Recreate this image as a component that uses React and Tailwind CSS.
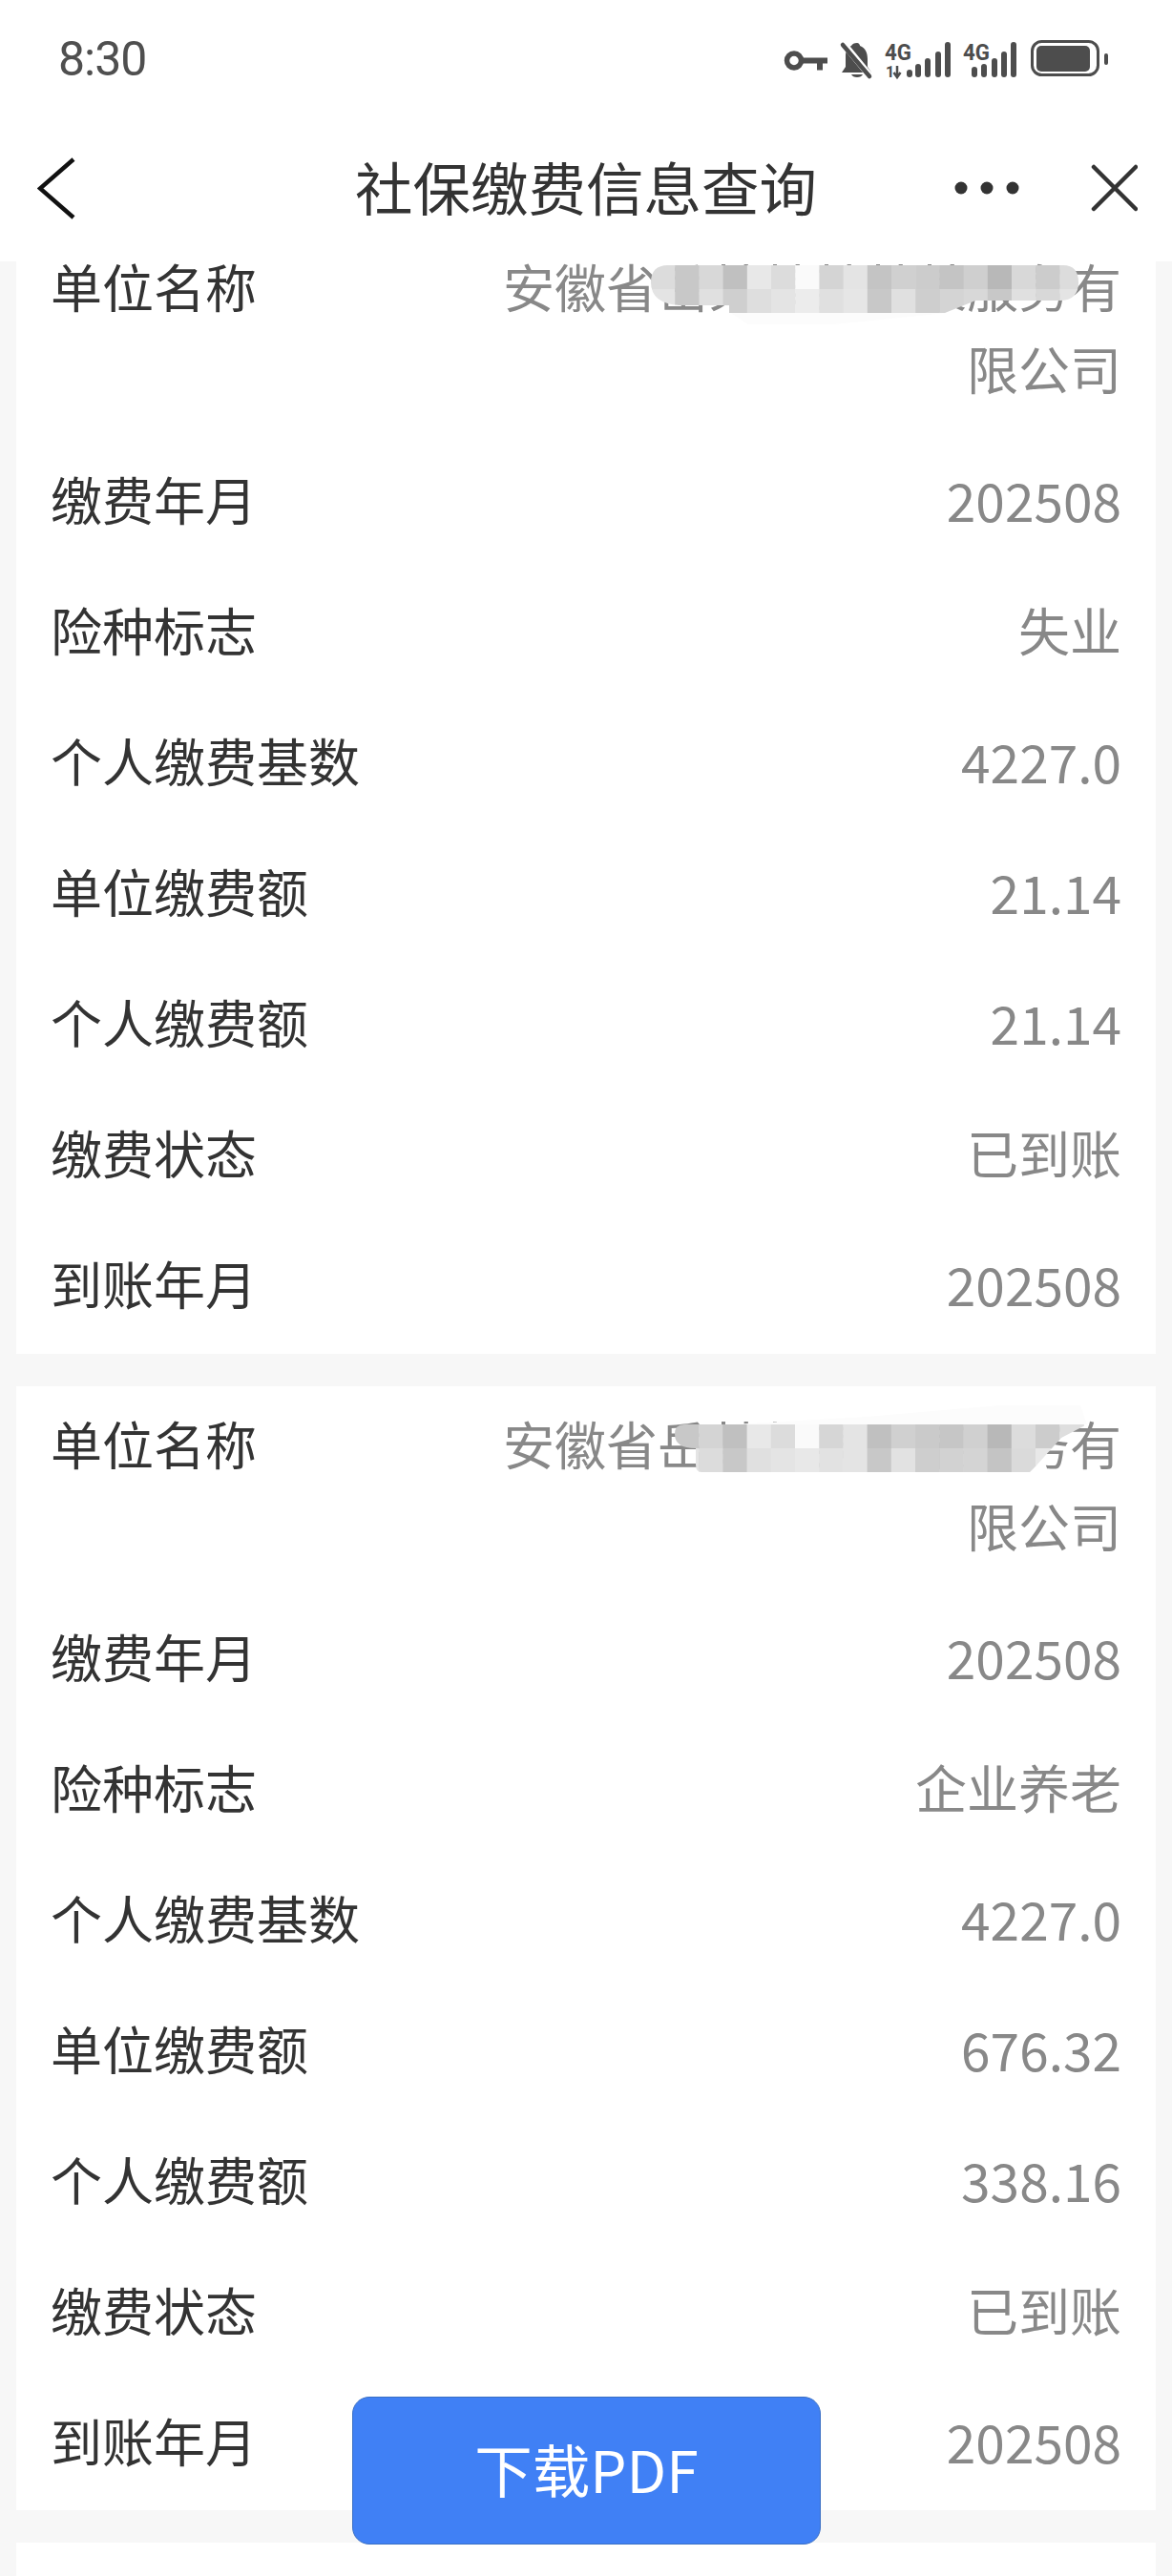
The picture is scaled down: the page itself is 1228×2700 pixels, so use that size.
const records = [
  {
    type: '失业',
    unitPay: '21.14',
    personPay: '21.14',
    mosaic: {
      className: 'left-[157px] top-[21px]',
      clip: 'M18 0H432Q448 0 448 18Q448 36 430 37H340L308 50H82V42H30Q0 40 0 18Q0 0 18 0Z',
      smudge: '82,50 308,50 190,62 100,62',
      offset: -2,
      rows: [
        ['#dcdcdc', '#c8c8c8', '#d8d8d8', '#c0c0c0', '#e8e8e8', '#dcdcdc', '#fafafa', '#d4d4d4', '#e4e4e4', '#c4c4c4', '#d0d0d0', '#cccccc', '#c4c4c4', '#cfcfcf', '#b8b8b8', '#d8d8d8', '#cccccc', '#dcdcdc'],
        ['#e4e4e4', '#c8c8c8', '#e0e0e0', '#cfcfcf', '#dedede', '#e4e4e4', '#ececec', '#e0e0e0', '#e6e6e6', '#c8c8c8', '#e0e0e0', '#cecece', '#d4d4d4', '#d8d8d8', '#c8c8c8', '#e0e0e0', '#d8d8d8', '#e4e4e4'],
      ],
    },
  },
  {
    type: '企业养老',
    unitPay: '676.32',
    personPay: '338.16',
    mosaic: {
      className: 'left-[180px] top-[23px]',
      clip: 'M10 0H432L405 14L378 44L372 50H28Q22 50 22 42V25Q0 25 0 10Q0 0 10 0Z',
      smudge: '60,0 200,-8 340,-20 425,-20 432,0',
      offset: 0,
      rows: [
        ['#c8c8c8', '#d4d4d4', '#c0c0c0', '#e8e8e8', '#dcdcdc', '#fafafa', '#d6d6d6', '#e4e4e4', '#c0c0c0', '#d0d0d0', '#cacaca', '#c6c6c6', '#d0d0d0', '#b8b8b8', '#dcdcdc', '#cccccc', '#dedede'],
        ['#e4e4e4', '#dcdcdc', '#c8c8c8', '#e0e0e0', '#e4e4e4', '#e8e8e8', '#e2e2e2', '#e4e4e4', '#c8c8c8', '#e2e2e2', '#cecece', '#d2d2d2', '#d4d4d4', '#c4c4c4', '#dadada', '#e8e8e8', '#e8e8e8'],
      ],
    },
  },
]

function StatusIcons() {
  const bars1 = [[950, 71], [959, 65], [969, 59], [980, 52], [990, 42]]
  const bars2 = [[1018, 68], [1028, 65], [1039, 59], [1049, 52], [1059, 42]]
  return (
    <svg width="345" height="44" viewBox="820 38 345 44" fill="#4d4d4d">
      {/* key */}
      <circle cx="832" cy="61.5" r="7.5" fill="none" stroke="#4d4d4d" strokeWidth="5.5" />
      <path d="M840 58.5h27v6h-5v7h-6v-7h-16z" />
      {/* muted bell */}
      <path d="M898 43c2 0 3 2 3 3c6 2 8 8 8 14v8l4 6h-31l4-6v-12c0-4 2-8 6-10c1-2 3-3 6-3z" />
      <path d="M892 76h12c-1 2-3 3-6 3s-5-1-6-3z" />
      <path d="M884 44l28 34" stroke="#fff" strokeWidth="7" />
      <path d="M883 45l28 33" stroke="#4d4d4d" strokeWidth="4.5" strokeLinecap="round" />
      {/* sim 1 */}
      <text x="927" y="61" fontFamily="Roboto" fontWeight="700" fontSize="24" textLength="28" lengthAdjust="spacingAndGlyphs">4G</text>
      <text x="928" y="79" fontFamily="Roboto" fontWeight="700" fontSize="16">1</text>
      <path d="M940 67v10M936.5 74l3.5 5l3.500-5" fill="none" stroke="#4d4d4d" strokeWidth="2.500" />
      {bars1.map(([x, y]) => (
        <rect key={x} x={x} y={y} width="6" height={79 - y} rx="3" />
      ))}
      {/* sim 2 */}
      <text x="1009" y="61" fontFamily="Roboto" fontWeight="700" fontSize="24" textLength="28" lengthAdjust="spacingAndGlyphs">4G</text>
      {bars2.map(([x, y]) => (
        <rect key={x} x={x} y={y} width="6" height={79 - y} rx="3" />
      ))}
      {/* battery */}
      <rect x="1081.500" y="41.500" width="69" height="35" rx="10" fill="none" stroke="#4d4d4d" strokeWidth="3" />
      <rect x="1086" y="46" width="56" height="27" rx="5" />
      <rect x="1157" y="54" width="4" height="12" rx="2" />
    </svg>
  )
}

function Mosaic({ className, clip, smudge, offset, rows }) {
  const step = 25.2
  return (
    <svg
      width="450"
      height="50"
      viewBox="0 0 450 50"
      className={`absolute overflow-visible ${className}`}
    >
      <polygon points={smudge} fill="#fcfcfc" />
      <g style={{ clipPath: `path('${clip}')` }}>
        {rows.map((row, r) =>
          row.map((color, c) => (
            <rect key={`${r}-${c}`} x={offset + c * step} y={r * 25} width={step + 0.5} height="25.500" fill={color} />
          ))
        )}
      </g>
    </svg>
  )
}

function Row({ label, numeric, children }) {
  return (
    <div className="flex justify-between pt-[22.5px] pb-[28.5px] first:pt-[17px] leading-[86px]">
      <div className="text-[#333333]">{label}</div>
      <div className={`relative w-[648px] text-right text-[#888888] ${numeric ? 'text-[55px]' : ''}`}>{children}</div>
    </div>
  )
}

function RecordCard({ record }) {
  return (
    <div className="bg-white px-[36px] pb-[2px]">
      <Row label="单位名称">
        安徽省岳某某某某某服务有限公司
        <Mosaic {...record.mosaic} />
      </Row>
      <Row label="缴费年月" numeric>202508</Row>
      <Row label="险种标志">{record.type}</Row>
      <Row label="个人缴费基数" numeric>4227.0</Row>
      <Row label="单位缴费额" numeric>{record.unitPay}</Row>
      <Row label="个人缴费额" numeric>{record.personPay}</Row>
      <Row label="缴费状态">已到账</Row>
      <Row label="到账年月" numeric>202508</Row>
    </div>
  )
}

export default function App() {
  return (
    <div className="relative h-[2700px] overflow-hidden bg-[#f7f7f7] font-['Noto_Sans_CJK_SC',sans-serif] text-[54px]">
      {/* Header */}
      <div className="relative z-10 h-[274px] bg-white">
        <div className="flex h-[124px] items-center justify-between pl-[61px] pr-[63px]">
          <span className="font-['Roboto',sans-serif] text-[50px] leading-none tracking-[-1px] text-[#4f4f4f]">8:30</span>
          <StatusIcons />
        </div>
        <div className="grid h-[146px] grid-cols-[1fr_auto_1fr] items-center px-[36px]">
          <svg width="40" height="65" viewBox="0 0 40 65" fill="none" stroke="#111111" strokeWidth="4.500" className="ml-[3px]">
            <path d="M38 2L3 32.500L38 63" />
          </svg>
          <h1 className="pb-[3px] text-[60.5px] leading-none font-normal text-[#333333]">社保缴费信息查询</h1>
          <div className="flex items-center justify-end gap-[74px]">
            <svg width="68" height="14" viewBox="0 0 68 14" fill="#333333">
              <circle cx="7" cy="7" r="6.500" />
              <circle cx="34" cy="7" r="6.500" />
              <circle cx="61" cy="7" r="6.500" />
            </svg>
            <svg width="50" height="50" viewBox="0 0 50 50" fill="none" stroke="#333333" strokeWidth="4.500" strokeLinecap="round">
              <path d="M4 3L48 47M48 3L4 47" />
            </svg>
          </div>
        </div>
      </div>

      {/* Records, scrolled under the header */}
      <div className="mx-[17px] -mt-[34px] flex flex-col gap-[34px]">
        {records.map(record => (
          <RecordCard key={record.type} record={record} />
        ))}
        <div className="h-[100px] bg-white" />
      </div>

      <button className="absolute bottom-[33px] left-[369px] h-[155px] w-[491px] rounded-[18px] border border-[#3a6fc4] bg-[#4080f5] pb-[5px] text-[60.5px] leading-none text-white">
        下载PDF
      </button>
    </div>
  )
}
